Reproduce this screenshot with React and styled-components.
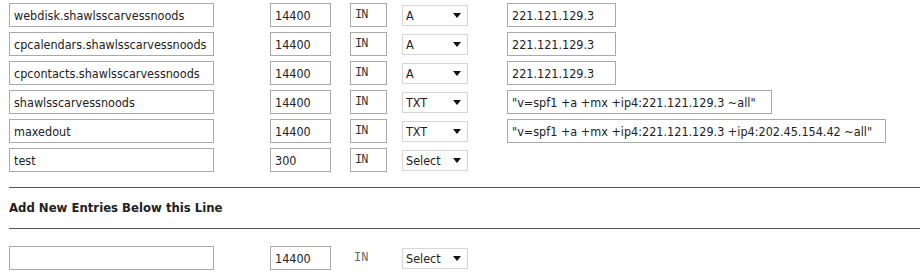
import React from 'react';
import styled, { createGlobalStyle } from 'styled-components';

const GlobalStyle = createGlobalStyle`
  body {
    margin: 0;
    background: #ffffff;
    font-family: "DejaVu Sans Condensed", "DejaVu Sans", sans-serif;
    font-size: 12px;
    color: #222;
  }
`;

const Page = styled.div`
  width: 920px;
  height: 280px;
  overflow: hidden;
  padding: 3px 0 0 9px;
  box-sizing: border-box;
`;

const RecordList = styled.div`
  display: flex;
  flex-direction: column;
  gap: 5px;
  margin-top: ${p => p.$top || 0}px;
`;

const Row = styled.div`
  display: grid;
  grid-template-columns: 261px 80px 52px 105px 1fr;
  align-items: center;
  height: 24px;
`;

const TextField = styled.input`
  box-sizing: border-box;
  width: ${p => p.$w}px;
  height: 24px;
  padding: 0 4px;
  border: 1px solid #a9a9a9;
  background: #fff;
  font-family: inherit;
  font-size: 12.5px;
  color: #222;
  outline: none;
`;

const ClassField = styled.input`
  box-sizing: border-box;
  width: 37px;
  height: 24px;
  padding: 0 4px;
  border: 1px solid #a9a9a9;
  background: #fff;
  font-family: "Liberation Mono", monospace;
  font-size: 12px;
  letter-spacing: -1px;
  color: #333;
  outline: none;
`;

const ClassLabel = styled.span`
  font-family: "Liberation Mono", monospace;
  font-size: 12px;
  color: #666;
  padding-left: 4px;
`;

const SelectWrap = styled.div`
  position: relative;
  width: 66px;
  height: 21px;
`;

const Select = styled.select`
  appearance: none;
  box-sizing: border-box;
  width: 100%;
  height: 100%;
  padding: 0 0 0 3px;
  border: 1px solid #d6d6d6;
  border-radius: 0;
  background: #fff;
  font-family: inherit;
  font-size: 12.5px;
  color: #222;
  outline: none;
`;

const Caret = styled.span`
  position: absolute;
  right: 7px;
  top: 8px;
  width: 0;
  height: 0;
  border-left: 4px solid transparent;
  border-right: 4px solid transparent;
  border-top: 5px solid #111;
  pointer-events: none;
`;

const Divider = styled.hr`
  border: 0;
  border-top: 1px solid #555;
  margin: ${p => p.$top}px 0 0 0;
`;

const Heading = styled.div`
  font-weight: bold;
  font-size: 13px;
  color: #222;
  height: 40px;
  line-height: 40px;
`;

const records = [
  { name: 'webdisk.shawlsscarvessnoods', ttl: '14400', type: 'A', value: '221.121.129.3', vw: 109 },
  { name: 'cpcalendars.shawlsscarvessnoods', ttl: '14400', type: 'A', value: '221.121.129.3', vw: 109 },
  { name: 'cpcontacts.shawlsscarvessnoods', ttl: '14400', type: 'A', value: '221.121.129.3', vw: 109 },
  { name: 'shawlsscarvessnoods', ttl: '14400', type: 'TXT', value: '"v=spf1 +a +mx +ip4:221.121.129.3 ~all"', vw: 265 },
  { name: 'maxedout', ttl: '14400', type: 'TXT', value: '"v=spf1 +a +mx +ip4:221.121.129.3 +ip4:202.45.154.42 ~all"', vw: 379 },
  { name: 'test', ttl: '300', type: 'Select', value: null },
];

const TypeSelect = ({ value }) => (
  <SelectWrap>
    <Select defaultValue={value}>
      <option>Select</option>
      <option>A</option>
      <option>CNAME</option>
      <option>TXT</option>
    </Select>
    <Caret />
  </SelectWrap>
);

const App = () => {
  return (
    <Page>
      <GlobalStyle />
      <RecordList>
        {records.map((r, i) => (
          <Row key={i}>
            <TextField $w={205} defaultValue={r.name} />
            <TextField $w={61} defaultValue={r.ttl} />
            <ClassField defaultValue="IN" readOnly />
            <TypeSelect value={r.type} />
            {r.value ? <TextField $w={r.vw} defaultValue={r.value} /> : <span />}
          </Row>
        ))}
      </RecordList>
      <Divider $top={15} />
      <Heading>Add New Entries Below this Line</Heading>
      <Divider $top={0} />
      <RecordList $top={17}>
        <Row>
          <TextField $w={205} defaultValue="" />
          <TextField $w={61} defaultValue="14400" />
          <ClassLabel>IN</ClassLabel>
          <TypeSelect value="Select" />
          <span />
        </Row>
      </RecordList>
    </Page>
  );
};

export default App;
